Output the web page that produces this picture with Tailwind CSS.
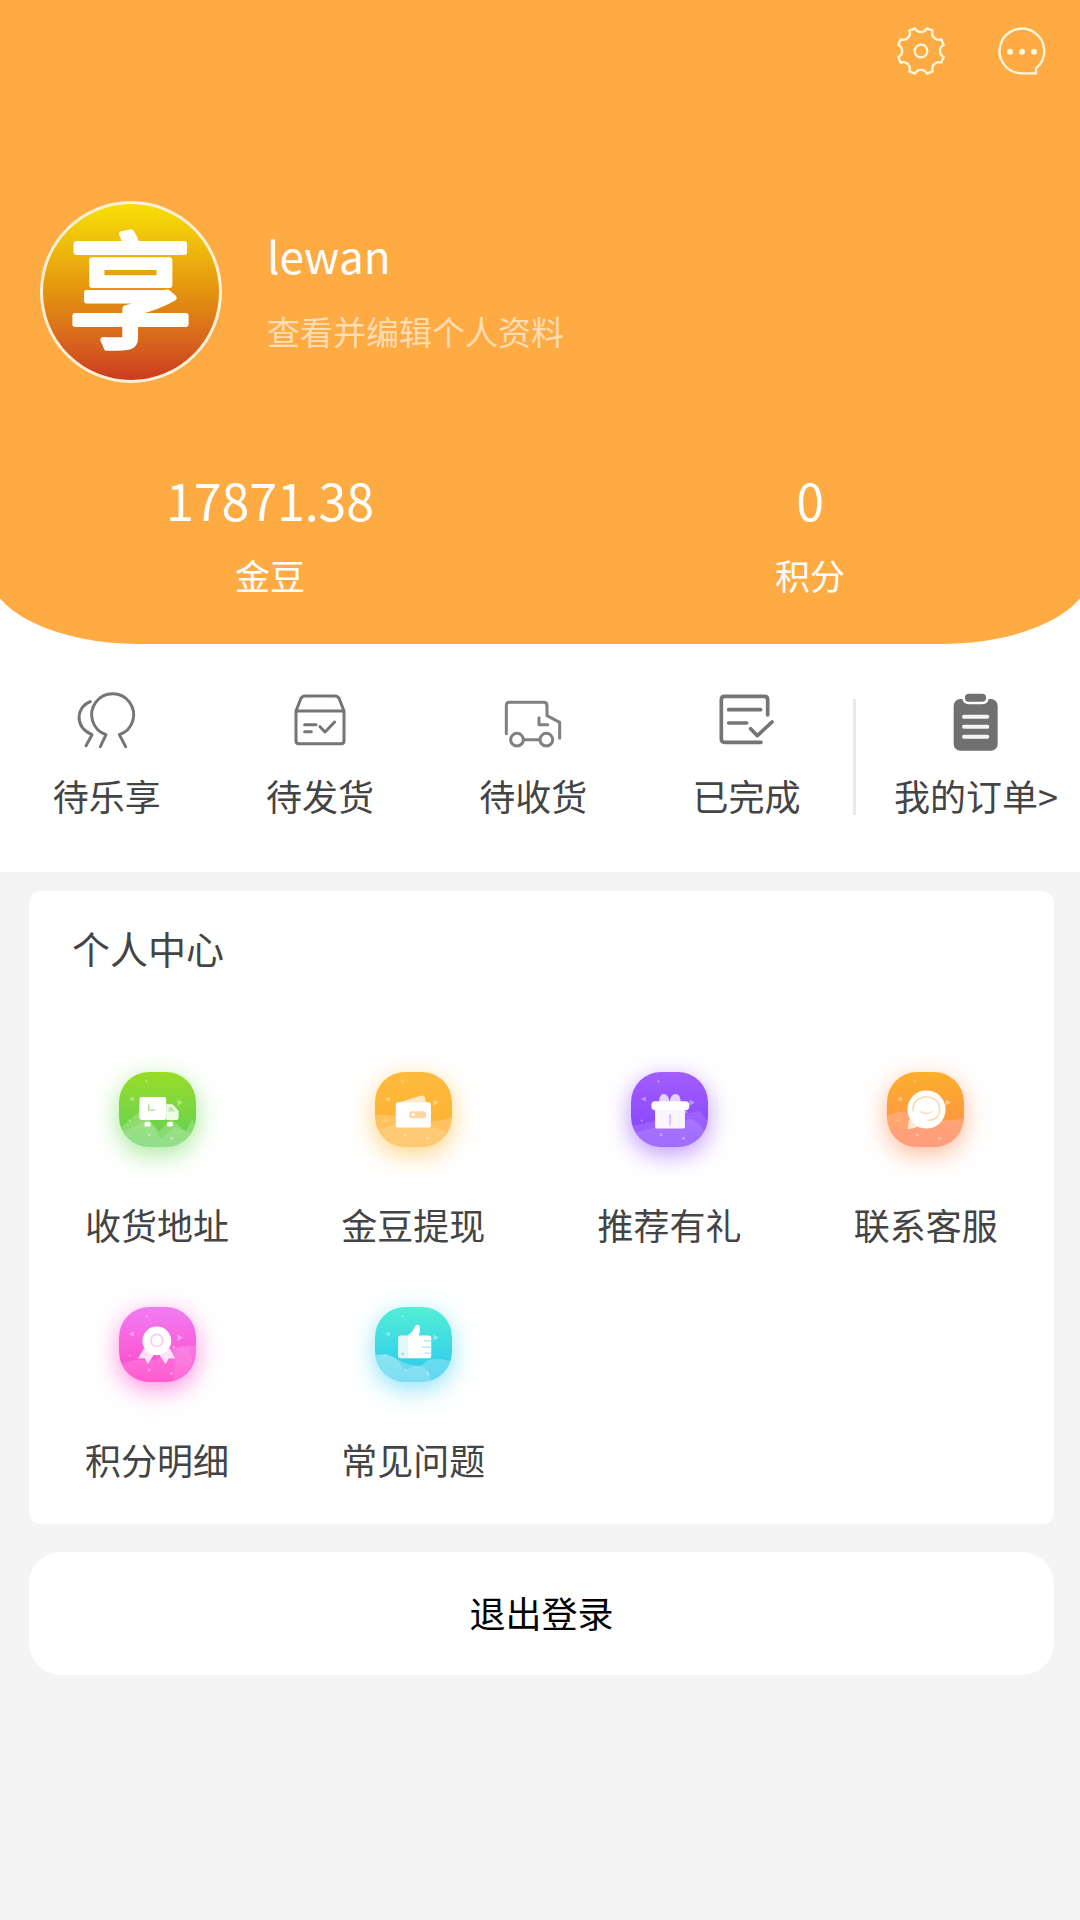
<!DOCTYPE html>
<html lang="zh-CN">
<head>
  <meta charset="UTF-8" />
  <meta name="viewport" content="width=device-width, initial-scale=1.0" />
  <title>个人中心</title>
  <script src="https://cdn.jsdelivr.net/npm/@tailwindcss/browser@4"></script>
</head>

<body class="min-h-screen bg-[#f4f4f4] text-[#444] text-4xl font-['Noto_Sans_CJK_SC',sans-serif]">
  <!-- shared decoration of the menu tiles -->
  <svg class="hidden">
    <symbol id="sparkles" viewBox="0 0 230 224">
      <g fill="#fff" fill-opacity=".4">
        <circle cx="82" cy="28" r="3" />
        <path d="M30 81l14-7v14z" />
        <path d="M175 82l16 9-16 10z" />
        <circle cx="164" cy="120" r="4" />
        <circle cx="32" cy="145" r="3" />
        <circle cx="90" cy="188" r="4" />
        <circle cx="157" cy="198" r="4" />
      </g>
    </symbol>
  </svg>

  <div class="bg-white overflow-hidden">
    <header class="-mx-3 px-3 pb-[45px] bg-[#ffab44] text-white rounded-b-[150px_75px]">
      <div class="flex justify-end gap-[51px] pt-[26px] pr-[33px]">
        <button aria-label="设置">
          <svg class="size-[50px]" viewBox="-75 -75 150 150" fill="none" stroke="#fff6dc" stroke-width="7" stroke-linejoin="round">
            <path d="M-18-68A20 20 0 0 0 18-68L35-61A20 20 0 0 0 61-35L68-18A20 20 0 0 0 68 18L61 35A20 20 0 0 0 35 61L18 68A20 20 0 0 0-18 68L-35 61A20 20 0 0 0-61 35L-68 18A20 20 0 0 0-68-18L-61-35A20 20 0 0 0-35-61Z" />
            <circle r="19" />
          </svg>
        </button>
        <button aria-label="消息">
          <svg class="size-[50px]" viewBox="-75 -75 150 150" fill="none" stroke="#fff6dc" stroke-width="7" stroke-linejoin="round">
            <path d="M0 67A67 67 0 1 1 42 52V67Z" />
            <g fill="#fff6dc" stroke="none">
              <circle cx="-36" cy="2" r="9" />
              <circle cy="2" r="9" />
              <circle cx="36" cy="2" r="9" />
            </g>
          </svg>
        </button>
      </div>

      <a href="#profile" class="flex items-center gap-[45px] mt-[125px] pl-10">
        <span class="size-[182px] shrink-0 rounded-full border-3 border-[#fff0d8] bg-linear-to-b from-[#f7e005] via-[#e2930f] to-[#cc3a1f]">
          <svg class="size-full overflow-visible" viewBox="0 0 177 177">
            <text x="88" y="134" text-anchor="middle" font-size="124" font-weight="400" fill="#fff" stroke="#fff" stroke-width="6" stroke-linejoin="round">享</text>
          </svg>
        </span>
        <span class="flex flex-col gap-5 pb-[6px]">
          <span class="text-[44px] leading-[64px]">lewan</span>
          <span class="text-[33px] leading-[48px] text-white/60">查看并编辑个人资料</span>
        </span>
      </a>

      <div class="grid grid-cols-2 text-center mt-20">
        <a href="#beans">
          <p class="text-[50px] leading-[72px]">17871.38</p>
          <p class="text-[35px] leading-[48px] mt-4">金豆</p>
        </a>
        <a href="#points">
          <p class="text-[50px] leading-[72px]">0</p>
          <p class="text-[35px] leading-[48px] mt-4">积分</p>
        </a>
      </div>
    </header>

    <nav class="flex pt-[43px] pb-[53px] text-center leading-[48px]">
      <div class="w-[79%] grid grid-cols-4">
        <a href="#share" class="flex flex-col items-center gap-[18px]">
          <svg class="size-[66px]" viewBox="3 0 198 198" fill="none" stroke="#757575" stroke-width="9" stroke-linecap="round" stroke-linejoin="round">
            <path d="M82 179L99 143A63 63 0 1 1 139 143L158 179" />
            <path d="M52 44C8 60 4 120 57 143L39 176" />
          </svg>
          待乐享
        </a>
        <a href="#shipping" class="flex flex-col items-center gap-[18px]">
          <svg class="size-[66px]" viewBox="3 0 198 198" fill="none" stroke="#757575" stroke-width="9" stroke-linecap="round" stroke-linejoin="round">
            <path d="M30 72L44 36Q48 27 57 27H147Q156 27 160 36L174 72V162Q174 170 166 170H38Q30 170 30 162ZH174" />
            <path d="M56 113H90M56 134H76M102 119L117 135L146 105" />
          </svg>
          待发货
        </a>
        <a href="#receiving" class="flex flex-col items-center gap-[18px]">
          <svg class="size-[66px]" viewBox="3 0 198 198" fill="none" stroke="#808080" stroke-width="9" stroke-linecap="round" stroke-linejoin="round">
            <path d="M22 140V55Q22 46 31 46H134Q144 46 144 56V86L182 106V154" />
            <path d="M120 92V113H146M73 158H123" />
            <circle cx="54" cy="158" r="19" />
            <circle cx="142" cy="158" r="19" />
          </svg>
          待收货
        </a>
        <a href="#finished" class="flex flex-col items-center gap-[18px]">
          <svg class="size-[66px]" viewBox="0 0 198 198" fill="none" stroke="#757575" stroke-width="11" stroke-linecap="round" stroke-linejoin="round">
            <path d="M161 84V38Q161 28 151 28H32Q22 28 22 38V156Q22 166 32 166H141" />
            <path d="M44 68H140M44 108H98M110 125L130 146L174 105" />
          </svg>
          已完成
        </a>
      </div>
      <div class="w-[3px] h-[116px] mt-3 bg-[#e9e9e9]"></div>
      <a href="#orders" class="flex-1 flex flex-col items-center gap-[18px] pl-4 whitespace-nowrap">
        <svg class="size-[66px]" viewBox="0 0 198 198">
          <rect x="32" y="36" width="132" height="155" rx="20" fill="#707070" />
          <rect x="58" y="12" width="79" height="40" rx="18" fill="#fff" />
          <rect x="66" y="20" width="63" height="24" rx="11" fill="#707070" />
          <path d="M63 89H133M63 119H133M63 149H133" stroke="#f4f4f4" stroke-width="12" stroke-linecap="round" />
        </svg>
        我的订单&gt;
      </a>
    </nav>
  </div>

  <main class="pl-[29px] pr-[26px]">
    <section class="mt-[19px] pt-[29px] pb-[41px] bg-white rounded-xl">
      <h2 class="pl-[43px] text-[38px] leading-[56px]">个人中心</h2>
      <div class="grid grid-cols-4 gap-y-[59px] mt-24 leading-[48px]">
        <a href="#address" class="flex flex-col items-center gap-[53px]">
          <span class="w-[77px] h-[75px] rounded-[30px] overflow-hidden bg-linear-to-b from-[#98dc22] to-[#5ccf55] shadow-[0_7px_24px_#7fdf6ab0]">
            <svg class="size-full" viewBox="0 0 230 224">
              <path d="M0 172L65 115L120 178L155 140L200 178L218 142L230 160V224H0Z" fill="#fff" fill-opacity=".2" />
              <path d="M0 185L90 140L125 200L165 165L230 185V224H0Z" fill="#fff" fill-opacity=".15" />
              <use href="#sparkles" />
              <rect x="61" y="75" width="80" height="68" rx="6" fill="#fff" />
              <path d="M141 96H158Q162 96 178 117V137Q178 143 172 143H141Z" fill="#eefbe6" />
              <path d="M148 104H157L168 118H148Z" fill="#bfe9a4" />
              <path d="M89 97V114H108" fill="none" stroke="#a6e07c" stroke-width="4" />
              <rect x="76" y="149" width="18" height="14" rx="5" fill="#fff" />
              <rect x="143" y="149" width="18" height="14" rx="5" fill="#fff" />
            </svg>
          </span>
          收货地址
        </a>
        <a href="#withdraw" class="flex flex-col items-center gap-[53px]">
          <span class="w-[77px] h-[75px] rounded-[30px] overflow-hidden bg-linear-to-b from-[#fdbb3d] to-[#feae30] shadow-[0_7px_24px_#ffc04db0]">
            <svg class="size-full" viewBox="0 0 230 224">
              <path d="M0 128Q40 124 90 142T230 136V224H0Z" fill="#fff" fill-opacity=".22" />
              <path d="M0 178Q90 130 230 184V224H0Z" fill="#fff" fill-opacity=".14" />
              <use href="#sparkles" />
              <path d="M68 92L136 71Q147 68 150 80L152 92Z" fill="#ffe9c6" />
              <rect x="62" y="90" width="105" height="76" rx="8" fill="#fff" />
              <rect x="102" y="117" width="50" height="21" rx="6" fill="#fdd6a4" />
              <circle cx="114" cy="127" r="5" fill="#fff" />
            </svg>
          </span>
          金豆提现
        </a>
        <a href="#invite" class="flex flex-col items-center gap-[53px]">
          <span class="w-[77px] h-[75px] rounded-[30px] overflow-hidden bg-linear-to-b from-[#a35dfb] to-[#8440fc] shadow-[0_7px_24px_#a366ffb0]">
            <svg class="size-full" viewBox="0 0 230 224">
              <path d="M0 162L205 116L230 150V224H0Z" fill="#fff" fill-opacity=".12" />
              <path d="M0 184L180 140L206 156L230 200V224H0Z" fill="#fff" fill-opacity=".12" />
              <use href="#sparkles" />
              <path d="M84 90Q84 66 99 66Q112 68 115 90Q118 68 133 66Q148 66 148 90Z" fill="#e6d4ff" />
              <rect x="72" y="105" width="89" height="64" rx="5" fill="#faf6ff" />
              <rect x="61" y="87" width="113" height="27" rx="11" fill="#fff" />
              <path d="M117 126V160" stroke="#cbacf8" stroke-width="4" />
            </svg>
          </span>
          推荐有礼
        </a>
        <a href="#service" class="flex flex-col items-center gap-[53px]">
          <span class="w-[77px] h-[75px] rounded-[30px] overflow-hidden bg-linear-to-b from-[#fbb02b] to-[#ff8a48] shadow-[0_7px_24px_#ff9b6bb0]">
            <svg class="size-full" viewBox="0 0 230 224">
              <path d="M0 132Q50 100 90 140Q150 150 230 140V224H0Z" fill="#ffb5a0" fill-opacity=".5" />
              <path d="M0 170Q80 180 150 154Q200 146 230 176V224H0Z" fill="#ff9c84" fill-opacity=".5" />
              <use href="#sparkles" />
              <path d="M66 140L62 170Q76 172 94 162Z" fill="#ffe6d2" />
              <circle cx="118" cy="112" r="57" fill="#fff" />
              <path d="M78 116V105A40 37 0 0 1 157 105V118Q152 144 124 144M102 119Q117 129 132 119" fill="none" stroke="#fbdcb2" stroke-width="5" stroke-linecap="round" />
            </svg>
          </span>
          联系客服
        </a>
        <a href="#points-log" class="flex flex-col items-center gap-[53px]">
          <span class="w-[77px] h-[75px] rounded-[30px] overflow-hidden bg-linear-to-b from-[#f07cf2] to-[#ff3fc8] shadow-[0_7px_24px_#ff5fd0b0]">
            <svg class="size-full" viewBox="0 0 230 224">
              <path d="M0 172Q60 150 110 160Q170 104 230 116V224H0Z" fill="#fff" fill-opacity=".14" />
              <path d="M166 130Q215 100 218 160Q215 200 160 224Q175 170 166 130Z" fill="#fff" fill-opacity=".1" />
              <use href="#sparkles" />
              <path d="M74 124L57 154L77 153L86 170L106 140Z" fill="#ffe3fa" />
              <path d="M152 124L168 154L149 153L139 170L119 140Z" fill="#ffe3fa" />
              <circle cx="113" cy="101" r="43" fill="#fff" />
              <circle cx="113" cy="100" r="18" fill="none" stroke="#fbc9f2" stroke-width="5" />
            </svg>
          </span>
          积分明细
        </a>
        <a href="#faq" class="flex flex-col items-center gap-[53px]">
          <span class="w-[77px] h-[75px] rounded-[30px] overflow-hidden bg-linear-to-b from-[#52eed6] to-[#2cc6ee] shadow-[0_7px_24px_#5fd8f5b0]">
            <svg class="size-full" viewBox="0 0 230 224">
              <path d="M0 142Q40 136 66 156Q110 180 140 174Q160 150 200 156Q220 158 230 165V224H0Z" fill="#fff" fill-opacity=".25" />
              <path d="M0 150Q20 136 50 148Q84 165 84 196Q110 168 140 178Q165 184 168 224H0Z" fill="#fff" fill-opacity=".2" />
              <use href="#sparkles" />
              <path d="M96 85Q114 76 119 58Q124 50 131 54Q138 60 131 85H160Q168 85 168 92V146Q168 153 160 153H96Z" fill="#fff" />
              <path d="M76 85H96V153H76Q69 153 69 146V92Q69 85 76 85Z" fill="#e2f9fc" />
              <circle cx="83" cy="140" r="4" fill="#8fe0ee" />
              <path d="M146 101H168M140 120H168M146 138H168" stroke="#a4e9f2" stroke-width="4" />
            </svg>
          </span>
          常见问题
        </a>
      </div>
    </section>

    <button class="block w-full mt-7 mb-8 pt-[34px] pb-[37px] bg-white text-black leading-[52px] rounded-[32px]">退出登录</button>
  </main>
</body>
</html>
